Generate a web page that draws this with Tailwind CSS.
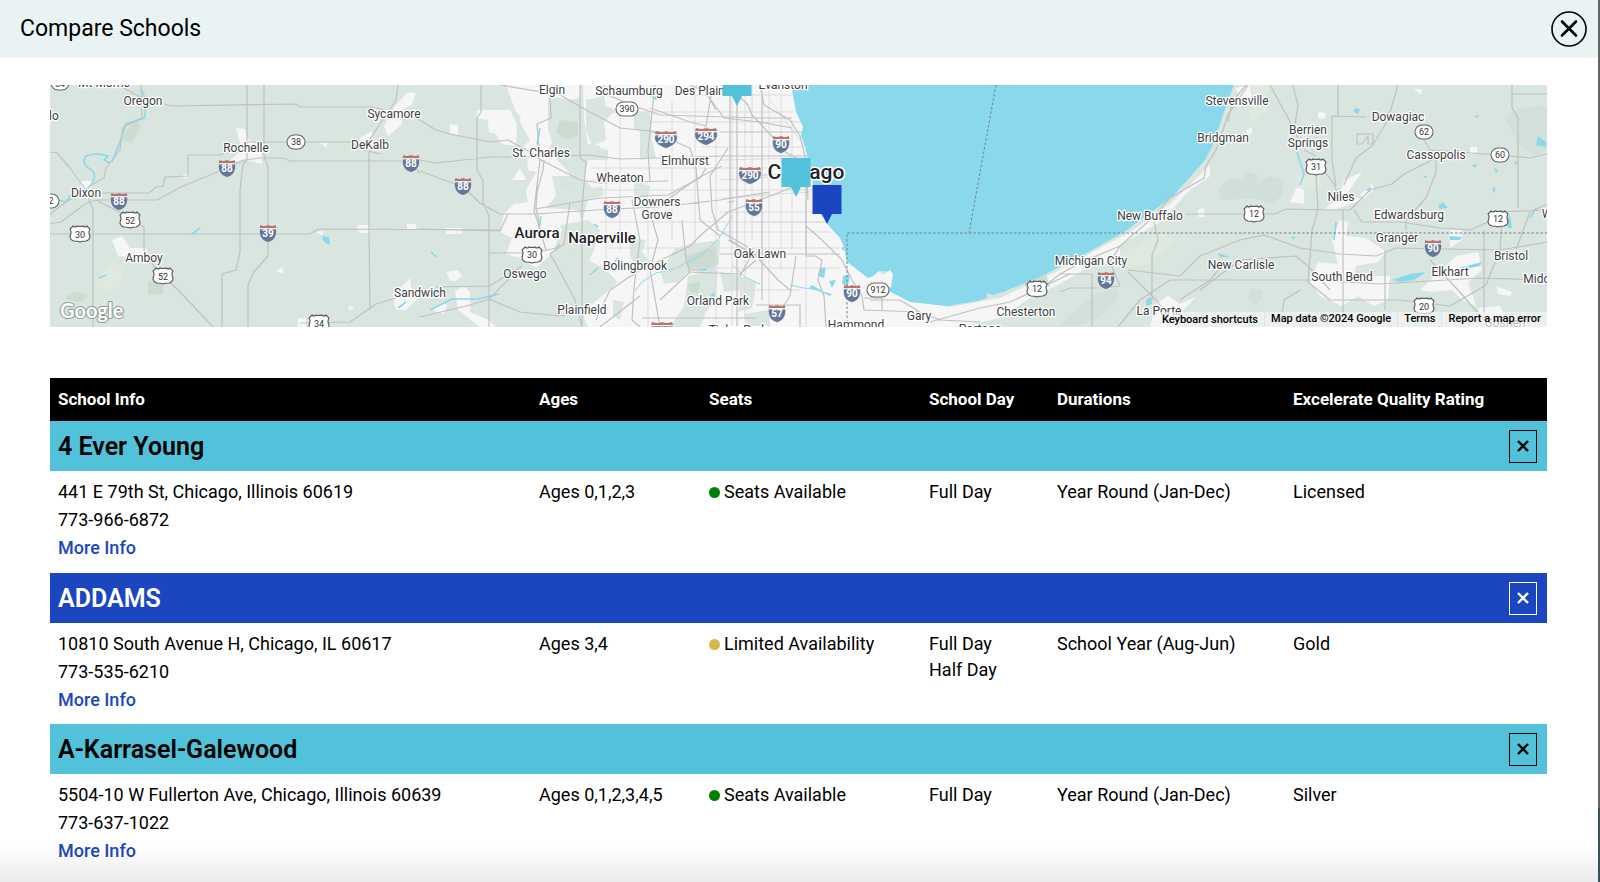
<!DOCTYPE html>
<html lang="en">
<head>
  <meta charset="UTF-8" />
  <meta name="viewport" content="width=device-width, initial-scale=1.0" />
  <title>Compare Schools</title>
  <script src="https://cdn.jsdelivr.net/npm/@tailwindcss/browser@4"></script>
</head>
<body class="flex min-h-screen bg-white font-[Roboto,sans-serif] text-black">
  <div class="flex-1 min-w-0">
    <!-- Header -->
    <header class="flex h-[58px] items-center justify-between bg-[#eaf3f4] pl-5 pr-[11px]">
      <h1 class="text-[23px]">Compare Schools</h1>
      <button type="button" aria-label="Close" class="h-9 w-9">
        <svg class="h-9 w-9" viewBox="0 0 36 36" fill="none" stroke="black">
          <circle cx="18" cy="18" r="17" stroke-width="1.6" />
          <path d="M11 10.500 25 24.500M25 10.500 11 24.500" stroke-width="2.6" stroke-linecap="round" />
        </svg>
      </button>
    </header>

    <main class="pl-[50px] pr-[51px] pt-[27px]">
      <!-- Map -->
      <section aria-label="Map of schools" class="relative overflow-hidden">
        <svg class="block h-[242px] w-full" viewBox="50 85 1497 242" preserveAspectRatio="xMidYMid slice">
          <defs>
            <g id="interstate">
              <path d="M-8.500-4H8.500C9.500 3 6 8 0 9.500-6 8-9.500 3-8.500-4Z" fill="#62779a" stroke="#f4f4f4" stroke-width=".7" />
              <path d="M-7.500-8Q-4-6 0-8 4-6 7.500-8L8.500-5H-8.500Z" fill="#b9746f" />
            </g>
            <g id="interstate-wide">
              <path d="M-11-4H11C13 3 7 7 0 9.500-7 7-13 3-11-4Z" fill="#62779a" stroke="#f4f4f4" stroke-width=".7" />
              <path d="M-10-8Q-4-6 0-8 4-6 10-8L11-5H-11Z" fill="#b9746f" />
            </g>
            <path id="us" d="M-7-8Q-5-6-3-8 0-7 3-8 5-6 7-8L10-5Q8-2 10 2 10 6 6 7 2 7 0 8-2 7-6 7-10 6-10 2-8-2-10-5Z" fill="#fff" stroke="#555" stroke-width="1.1" />
            <rect id="state" x="-9" y="-7" width="18" height="14" rx="7" fill="#fff" stroke="#666" stroke-width="1.1" />
            <rect id="state-wide" x="-11" y="-7" width="22" height="14" rx="7" fill="#fff" stroke="#666" stroke-width="1.1" />
            <path id="pin" d="M-14.500-39H14.500V-10H5L0 0-5-10H-14.500Z" />
          </defs>

          <!-- land -->
          <rect x="50" y="85" width="1497" height="242" fill="#d8e6df" />
          <g fill="#cddcd3">
            <path d="M130 125 137 118 141 127 131 143 121 140ZM65 297 74 291 86 294 83 302 66 300ZM148 282H163V294H148Z" />
            <path d="M1218 189 1230 179 1242 179 1248 172 1258 176 1256 183 1270 176 1284 180 1282 196 1270 204 1256 198 1241 199 1222 200Z" opacity=".7" />
            <path d="M1073 312 1095 294 1117 289 1118 300 1100 316 1078 326H1060ZM1250 288 1262 290 1262 300 1254 306 1248 297ZM1504 118 1520 108 1547 106V150L1536 156 1520 145Z" opacity=".6" />
            <path d="M1146 188 1178 146 1204 112 1216 116 1200 150 1172 176Z" opacity=".5" />
          </g>
          <g fill="#dfe9df">
            <path d="M97 279 112 260 123 268 121 285 107 293 96 286ZM1252 85H1270L1266 110 1250 124ZM1120 256 1160 232 1176 240 1150 262 1130 270ZM1296 178 1318 170 1322 188 1300 192Z" />
          </g>
          <!-- built-up areas -->
          <g fill="#f6f6f7">
            <path d="M236 128 245 129 247 138 260 146 262 158 262 164 246 160 228 162 242 150ZM80 181H92L91 189 82 190ZM112 240 122 236 130 248 146 248 150 258 118 256ZM183 174H188V178H183ZM321 143 328 143 326 148ZM276 271 282 267 284 274ZM357 225H370V233H359ZM407 224H416V229H407ZM360 138 372 131 374 145 360 150ZM394 107 408 92 416 93 412 104 402 110 402 124 388 136 384 126ZM393 296 410 278 412 291 420 296 406 310 396 310ZM348 306 354 307 350 311ZM298 318H306V327H298ZM315 232 324 231 322 235Z" />
            <path d="M477 110H510L517 124 516 146 502 144 496 134 489 132 488 120 477 118ZM450 124 458 125V135L450 133ZM506 85H535L524 106 532 130 516 112ZM445 228H462V234H446ZM446 272 458 270 462 276 454 282 450 280ZM455 291 464 286 470 292V312L488 320 496 327H480L458 310ZM433 311 438 305 447 304 444 314ZM512 180 520 168 526 180Z" />
            <path d="M534 85H580V98L560 102 552 120 552 142 548 150 572 176 552 176 556 196 546 208 578 210 582 222 562 230 552 254 536 268 520 258 506 254 512 238 500 232 504 214 514 204 528 202 526 190 536 172 528 170 527 156 520 150 530 140 520 122 523 102Z" />
            <path d="M583 85H860V327H588L582 312 602 296 618 282 604 268 584 258 578 244 590 232 582 222 588 200 598 196 584 178 588 160 606 160 600 146 588 144 584 120Z" />
            <path d="M836 220H860L870 272 905 300 950 307 1000 298 1056 272 1130 232 1170 204 1210 165 1210 176 1190 190 1160 222 1120 245 1120 262 1090 266 1060 284 1030 298 1000 318 960 327H836Z" />
            <path d="M1236 88 1250 85 1252 98 1240 100ZM1297 187 1304 190V204L1290 202ZM1318 112 1326 113 1324 119 1318 118ZM1247 129 1252 128V134H1247ZM1414 88 1422 90 1420 95ZM1198 210 1204 207 1205 217 1198 217ZM1344 180 1362 172 1348 192 1362 200 1340 208 1324 210 1340 196ZM1340 220 1348 222 1346 236 1366 238 1378 246 1386 252 1378 262 1356 266 1354 276 1390 276 1388 300 1374 306 1358 296 1342 306 1320 296 1310 282 1318 262 1338 264 1332 240ZM1420 290 1456 256 1478 252 1482 270 1468 282 1476 306 1462 300 1452 290 1432 292ZM1450 230H1462V240L1450 248ZM1470 147H1477V154H1470ZM1156 304 1168 296 1180 304 1196 297 1176 318 1164 327H1150ZM1496 286 1512 292 1510 296 1498 294ZM1360 195 1372 184 1374 190 1364 198ZM1478 308 1500 306 1510 327H1484Z" />
          </g>
          <!-- forest preserves -->
          <g fill="#d8e6df">
            <path d="M548 96 574 100 582 108 580 142 566 138 552 142 548 130ZM586 100 604 96 606 106 616 110 604 122 606 140 592 146 586 130ZM590 145 608 150 608 160 588 160ZM634 112 650 112 652 140 656 158 640 160 640 132 634 128ZM634 180 650 186 648 197 634 197ZM588 190 602 186 604 195 592 199ZM560 225 588 220 600 230 594 250 588 262 572 258ZM630 238 646 240 642 252 650 262 638 270 630 256ZM660 270 676 248 690 244 720 240 719 262 714 272 690 270 678 282 664 284ZM688 276 704 272 718 270 716 296 706 312 700 327H670L684 306ZM590 262 612 276 596 290 584 284ZM720 272 740 276 756 282 754 296 742 290 724 292ZM740 290 755 294 752 308 738 312ZM744 314 768 310 770 327H748ZM613 300 624 302 620 320 613 316ZM650 85 660 90 654 100 646 94ZM600 85 620 88 616 94 604 92ZM704 126 710 128 706 140Z" />
            <path d="M970 327 1000 318 1030 304 1060 290 1056 327Z" />
          </g>
          <g fill="#cbdbd1">
            <path d="M560 120 578 122 578 136 566 140 556 132ZM686 256 716 246 718 264 702 272 688 270ZM688 284 700 282 698 294 690 292ZM1024 284 1046 275 1050 286 1030 294Z" />
          </g>

          <!-- water -->
          <g fill="#8ad8ec">
            <path d="M791 85 796 112 803 127 801 135 805 147 807 155 812 180 820 213 828 225 840 238 844 247 847 262 868 278 872 277 880 271 891 272 892 286 887 290 910 302 947 306 977 301 987 298 987 293 993 295 1003 292 1020 285 1040 277 1087 253 1124 232 1150 213 1172 197 1190 177 1205 160 1212 147 1217 133 1224 112 1234 85Z" />
            <path d="M820 268 826 267 824 278 818 276ZM829 281 836 280 832 288ZM843 276 850 274 848 286 842 284ZM812 285 824 292 832 294 830 296 816 290 809 288ZM727 202 735 200 732 203ZM322 236 329 237 330 245 324 242ZM1355 108 1360 109 1358 114 1354 112ZM1474 116 1480 115 1477 118ZM1538 136 1546 142V147L1536 145ZM1218 253 1230 257 1220 257ZM1291 237 1295 236 1294 240ZM1450 236 1462 237 1460 240 1450 240ZM1438 206 1443 202 1448 208 1440 209ZM1494 168 1498 170 1496 174ZM1514 161 1518 162 1516 165ZM1492 190 1495 186 1495 193ZM1423 176 1428 176 1425 178ZM1472 165 1477 164 1475 168ZM1366 190 1371 186 1370 192ZM1146 300 1151 297 1152 304 1146 306ZM1392 280 1410 274 1426 272 1414 280 1400 282ZM1458 268 1482 262 1480 266 1460 270ZM1504 219 1510 216 1512 228 1508 228ZM698 270 708 267 706 271ZM710 296 714 292 715 297ZM652 97 658 96 656 100ZM841 248 845 246 844 251Z" />
          </g>
          <path d="M868 278 872 277 879 271 883 275 890 270 893 274 891 286 880 290Z" fill="#f6f6f7" />
          <g fill="none" stroke="#8ad8ec" stroke-width="1.6">
            <path d="M142 90Q148 105 144 118L126 124Q120 144 112 162M110 163 104 160 108 156Q96 152 86 156 80 164 92 170 98 176 90 186L86 190M59 200 66 202 72 194M398 308 406 302M99 278 106 275M192 234 200 228M540 128 537 145M541 216 538 235M430 310 444 303 452 299H478L499 294M431 252 436 257M590 275 598 268M594 224 598 227M614 262 618 258M1297 152 1304 174 1300 185M1334 240 1336 222M1530 218 1536 208" />
            <path d="M635 291 642 282 656 273 674 269 700 256 718 240 733 215M733 265 745 277 760 284M790 285 804 288 820 290" stroke-width="1" />
          </g>

          <!-- minor streets -->
          <g fill="none" stroke="#dcdcdf" stroke-width="1">
            <path d="M590 168H800M590 190H815M600 222H826M610 248H840M640 268H840M586 112H794M690 95H792M650 122H800M700 147H806M606 150V260M620 110V250M648 200V327M672 100V240M695 85V250M716 140V327M732 85V327M745 85V327M752 85V240M769 85V327M781 85V270M792 120V250M806 200V327M720 180 805 175M722 232H830M740 290H800M722 198 810 192M720 160 804 158M720 212H822M752 222H826M770 100 800 140M560 185 600 180" />
          </g>
          <!-- highways -->
          <g fill="none" stroke="#c0c0c1" stroke-width="1.2" stroke-linejoin="round">
            <path d="M247 85V160L243 164 240 190V252L236 270 222 274V327M264 85V155L268 168V256L254 272 248 285V327M165 104 171 106 296 104 300 107 372 107 385 110M245 142H350L364 150 380 154M50 234H310L318 229 500 230M50 152 57 153 70 168 84 187 93 210V327M141 85 142 118 123 127 120 150 106 168 104 178 90 186M96 193H149L156 187 163 186 165 177 188 176V155H220L234 150M118 85 142 98M50 214 66 202 80 194M50 224 61 222 85 204 96 200H157L181 187 227 168 244 160 260 158H283L290 161H400L412 163 420 174M96 200 125 215 144 227V250L155 268 180 292 213 327M369 152V230L370 310M300 323 350 322 376 304 396 298M398 85 396 100 384 118 376 130 368 142M408 115 420 120" />
            <path d="M420 120 436 130 450 134 490 142 508 140 530 152 541 160 580 180 600 183 668 181M420 160 436 163 490 157 530 157 588 155 620 159 660 158 720 156M420 171 463 187 480 203 500 214 535 214 612 209 660 207 720 200 770 192M481 85V112L477 118V170L483 180V202L489 216V327M420 229 500 231 508 214M550 95 551 118 537 124 540 160 534 210 546 250M544 160 543 170 537 192 536 208 540 226M580 85V158L586 162 582 208V327M535 209 600 198 668 195 700 178 706 168M570 202 564 244 550 254 556 264 575 300 582 327M489 253H534L556 248 560 244M436 287 489 286 506 276 522 266M420 317 470 305 489 299 520 312 560 316 580 312M489 299 510 278M596 320 610 290 640 270 690 246 702 234 714 224 728 212 760 200 796 186M640 327 632 320 634 288 640 240 632 200M650 212 658 240 650 270 660 327M660 300 690 272 686 260 682 220M700 85 724 118 760 122 792 128M655 85 648 150 650 182M648 130 690 148 696 168 700 220 720 236M728 148 710 176 712 210 718 230 760 254M500 85 560 95 590 112 620 128 660 132M650 108 690 122 706 126 712 90" />
            <path d="M600 92 640 108 660 115 760 118 792 118M690 85 706 92 716 110M730 85V240M738 95 748 105 752 115 785 150M760 85 764 105 790 120 800 136 806 160 808 200M737 85V327M762 85V300M720 132H802M720 156H808M720 254H840M750 175H780M728 240 755 255 778 280 790 290M664 202 698 178 722 166M782 150 796 158 806 180 806 256 815 256 822 260 818 280 824 296 826 327M796 256 790 296 776 318M806 226 822 240 842 260 852 280 862 296 864 310 920 312 940 320 980 322M756 305H800V327M740 276 752 254 730 240M870 300H900L920 312M930 322 980 308 1010 302 1036 290 1070 274M864 298 882 298 882 310M642 318H756M688 272 740 274 756 260M600 327 640 296" />
            <path d="M1248 85 1228 115 1216 150 1206 166 1204 178 1170 198 1150 220 1120 246 1082 262 1060 274 1040 290M1246 85 1232 102 1228 122M1270 85 1288 118 1298 138M1293 85 1298 106 1294 130M1304 150 1316 156M1316 175 1318 210 1312 230 1308 282 1330 300H1400L1450 306M1316 160 1334 184 1338 195M1332 116V160L1336 186M1332 116 1366 117M1338 85V116M1374 118 1390 112 1398 85M1388 120 1372 146 1356 158 1344 185M1186 214H1275L1286 209 1330 210H1350L1370 190 1392 184 1404 174 1436 158V172L1426 198 1406 220V230M1424 140 1430 150 1500 155 1530 158 1547 154M1512 85V108L1518 118V208M1512 94 1547 94M1354 210 1362 222 1400 222 1440 228 1470 230 1488 222 1500 212 1547 210M1343 210V327M1128 270 1180 276 1200 256 1240 240 1264 235 1300 248 1340 254 1376 256 1396 248 1500 250 1547 242M1120 246 1110 262 1120 286 1100 288M1154 222 1158 240 1152 255V300M1118 327 1140 300 1170 280 1310 280 1380 284 1480 278 1547 280M1128 272 1156 300 1170 318M1060 274H1092V327M1060 292 1070 288 1098 288M1200 290 1240 260 1296 256 1310 268 1330 290M1450 306 1486 285 1500 250 1502 220M1430 260 1458 290 1490 327M1484 230V327M1516 250 1530 212 1547 204M1300 290 1284 300 1280 327M1385 250V310M1180 300 1210 280 1225 262" />
            <path d="M1357 134H1373V144H1368V136L1362 144H1357Z" />
          </g>

          <!-- state lines -->
          <g fill="none" stroke="#6f8388" stroke-width="1" stroke-dasharray="2.5 2">
            <path d="M847 327V233H1547M996 85 969 233" />
          </g>

          <!-- road shields -->
          <use href="#interstate" x="227" y="168" />
          <use href="#interstate" x="119" y="201" />
          <use href="#interstate" x="411" y="163" />
          <use href="#interstate" x="268" y="233" />
          <use href="#interstate" x="463" y="186" />
          <use href="#interstate" x="612" y="209" />
          <use href="#interstate-wide" x="666" y="139" />
          <use href="#interstate-wide" x="706" y="136" />
          <use href="#interstate-wide" x="750" y="175" />
          <use href="#interstate-wide" x="662" y="330" />
          <use href="#interstate" x="754" y="207" />
          <use href="#interstate" x="781" y="144" />
          <use href="#interstate" x="852" y="293" />
          <use href="#interstate" x="777" y="313" />
          <use href="#interstate" x="1106" y="280" />
          <use href="#interstate" x="1433" y="248" />
          <use href="#us" x="130" y="220" />
          <use href="#us" x="163" y="276" />
          <use href="#us" x="80" y="234" />
          <use href="#us" x="319" y="323" />
          <use href="#us" x="532" y="255" />
          <use href="#us" x="1037" y="289" />
          <use href="#us" x="1254" y="214" />
          <use href="#us" x="1316" y="167" />
          <use href="#us" x="1498" y="219" />
          <use href="#us" x="1424" y="306" />
          <use href="#state" x="60" y="83" />
          <use href="#state" x="50" y="201" />
          <use href="#state" x="296" y="142" />
          <use href="#state" x="1424" y="132" />
          <use href="#state" x="1500" y="155" />
          <use href="#state-wide" x="627" y="109" />
          <use href="#state-wide" x="878" y="290" />
          <g class="text-[10px] font-bold" fill="#fff" text-anchor="middle">
            <text x="227" y="172">88</text>
            <text x="119" y="205">88</text>
            <text x="411" y="167">88</text>
            <text x="268" y="237">39</text>
            <text x="463" y="190">88</text>
            <text x="612" y="213">88</text>
            <text x="666" y="143">290</text>
            <text x="706" y="140">294</text>
            <text x="750" y="179">290</text>
            <text x="754" y="211">55</text>
            <text x="781" y="148">90</text>
            <text x="852" y="297">90</text>
            <text x="777" y="317">57</text>
            <text x="1106" y="284">94</text>
            <text x="1433" y="252">90</text>
          </g>
          <g class="text-[9px]" fill="#333" text-anchor="middle">
            <text x="130" y="224">52</text>
            <text x="163" y="280">52</text>
            <text x="80" y="238">30</text>
            <text x="319" y="327">34</text>
            <text x="532" y="258">30</text>
            <text x="1037" y="292">12</text>
            <text x="1254" y="217">12</text>
            <text x="1316" y="170">31</text>
            <text x="1498" y="222">12</text>
            <text x="1424" y="310">20</text>
            <text x="60" y="87">64</text>
            <text x="51" y="204">2</text>
            <text x="296" y="145">38</text>
            <text x="1424" y="135">62</text>
            <text x="1500" y="158">60</text>
            <text x="627" y="112">390</text>
            <text x="878" y="293">912</text>
          </g>

          <!-- place names -->
          <g class="text-[12px] [paint-order:stroke]" fill="#3c4043" stroke="#fff" stroke-width="2.5" stroke-linejoin="round" text-anchor="middle">
            <text x="104" y="87">Mt Morris</text>
            <text x="143" y="105">Oregon</text>
            <text x="54" y="120">lo</text>
            <text x="394" y="118">Sycamore</text>
            <text x="246" y="152">Rochelle</text>
            <text x="370" y="149">DeKalb</text>
            <text x="86" y="197">Dixon</text>
            <text x="144" y="262">Amboy</text>
            <text x="420" y="297">Sandwich</text>
            <text x="552" y="94">Elgin</text>
            <text x="629" y="95">Schaumburg</text>
            <text x="706" y="95">Des Plaines</text>
            <text x="541" y="157">St. Charles</text>
            <text x="685" y="165">Elmhurst</text>
            <text x="620" y="182">Wheaton</text>
            <text x="657" y="206">Downers</text>
            <text x="657" y="219">Grove</text>
            <text x="635" y="270">Bolingbrook</text>
            <text x="525" y="278">Oswego</text>
            <text x="582" y="314">Plainfield</text>
            <text x="718" y="305">Orland Park</text>
            <text x="738" y="334">Tinley Park</text>
            <text x="783" y="89">Evanston</text>
            <text x="760" y="258">Oak Lawn</text>
            <text x="919" y="320">Gary</text>
            <text x="856" y="329">Hammond</text>
            <text x="1026" y="316">Chesterton</text>
            <text x="980" y="333">Portage</text>
            <text x="1237" y="105">Stevensville</text>
            <text x="1398" y="121">Dowagiac</text>
            <text x="1223" y="142">Bridgman</text>
            <text x="1308" y="134">Berrien</text>
            <text x="1308" y="147">Springs</text>
            <text x="1436" y="159">Cassopolis</text>
            <text x="1341" y="201">Niles</text>
            <text x="1409" y="219">Edwardsburg</text>
            <text x="1150" y="220">New Buffalo</text>
            <text x="1397" y="242">Granger</text>
            <text x="1511" y="260">Bristol</text>
            <text x="1450" y="276">Elkhart</text>
            <text x="1091" y="265">Michigan City</text>
            <text x="1241" y="269">New Carlisle</text>
            <text x="1342" y="281">South Bend</text>
            <text x="1553" y="283">Middlebury</text>
            <text x="1547" y="218">W</text>
            <text x="1159" y="315">La Porte</text>
            <text x="1505" y="327">Goshen</text>
          </g>
          <g class="text-[15px] font-medium [paint-order:stroke]" fill="#202124" stroke="#fff" stroke-width="2.5" stroke-linejoin="round" text-anchor="middle">
            <text x="537" y="238">Aurora</text>
            <text x="602" y="243">Naperville</text>
          </g>
          <text class="text-[21px] font-medium [paint-order:stroke]" x="806" y="179" fill="#202124" stroke="#fff" stroke-width="3" stroke-linejoin="round" text-anchor="middle">Chicago</text>

          <!-- school markers -->
          <use href="#pin" x="737" y="106" fill="#51c2d9" />
          <use href="#pin" x="796" y="197" fill="#51c2d9" />
          <use href="#pin" x="827" y="224" fill="#1c46c0" />

          <text class="text-[20px] font-[Lato,sans-serif] font-bold [paint-order:stroke]" x="60" y="318" fill="#fff" stroke="#8f9996" stroke-width="2" stroke-linejoin="round">Google</text>
        </svg>
        <div class="absolute bottom-0 right-0 flex h-[15px] divide-x divide-[#d8e6df] bg-[#f5f5f5]/70 text-[11px] leading-[13px] font-medium">
          <button type="button" class="px-[6px]">Keyboard shortcuts</button>
          <span class="px-[6px]">Map data ©2024 Google</span>
          <a href="#" class="px-[6px]">Terms</a>
          <a href="#" class="px-[6px]">Report a map error</a>
        </div>
      </section>

      <!-- Comparison table -->
      <table class="mt-[51px] w-full table-fixed border-collapse text-left text-[18px]">
        <colgroup>
          <col class="w-[481px]" />
          <col class="w-[170px]" />
          <col class="w-[220px]" />
          <col class="w-[128px]" />
          <col class="w-[236px]" />
          <col />
        </colgroup>
        <thead class="text-[17px] leading-6">
          <tr class="h-[43px] bg-black text-white">
            <th class="px-2 pb-[2px] font-bold">School Info</th>
            <th class="px-2 pb-[2px] font-bold">Ages</th>
            <th class="px-2 pb-[2px] font-bold">Seats</th>
            <th class="px-2 pb-[2px] font-bold">School Day</th>
            <th class="px-2 pb-[2px] font-bold">Durations</th>
            <th class="px-2 pb-[2px] font-bold">Excelerate Quality Rating</th>
          </tr>
        </thead>
        <tbody>
          <tr class="h-[50px] bg-[#51c2d9]">
            <td colspan="6" class="pl-2 pr-[10px]">
              <div class="flex items-center justify-between">
                <h2 class="pt-[2px] text-[25px] leading-8 font-semibold">4 Ever Young</h2>
                <button type="button" aria-label="Remove 4 Ever Young" class="flex h-[33px] w-7 items-center justify-center border border-black">
                  <svg class="h-3 w-3" viewBox="0 0 12 12" fill="none" stroke="currentColor" stroke-width="2.4"><path d="M1 1 11 11M11 1 1 11" /></svg>
                </button>
              </div>
            </td>
          </tr>
          <tr class="h-[102px] align-top leading-[26px]">
            <td class="px-2 pt-[7px] leading-7">
              <p>441 E 79th St, Chicago, Illinois 60619</p>
              <p>773-966-6872</p>
              <a href="#" class="font-medium text-[#1c46c0]">More Info</a>
            </td>
            <td class="px-2 pt-2">Ages 0,1,2,3</td>
            <td class="px-2 pt-2">
              <div class="flex items-center gap-1"><span class="h-[11px] w-[11px] rounded-full bg-[#008000]"></span>Seats Available</div>
            </td>
            <td class="px-2 pt-2">Full Day</td>
            <td class="px-2 pt-2">Year Round (Jan-Dec)</td>
            <td class="px-2 pt-2">Licensed</td>
          </tr>
          <tr class="h-[50px] bg-[#1c46c0] text-white">
            <td colspan="6" class="pl-2 pr-[10px]">
              <div class="flex items-center justify-between">
                <h2 class="pt-[2px] text-[25px] leading-8 font-semibold">ADDAMS</h2>
                <button type="button" aria-label="Remove ADDAMS" class="flex h-[33px] w-7 items-center justify-center border border-white">
                  <svg class="h-3 w-3" viewBox="0 0 12 12" fill="none" stroke="currentColor" stroke-width="2.4"><path d="M1 1 11 11M11 1 1 11" /></svg>
                </button>
              </div>
            </td>
          </tr>
          <tr class="h-[101px] align-top leading-[26px]">
            <td class="px-2 pt-[7px] leading-7">
              <p>10810 South Avenue H, Chicago, IL 60617</p>
              <p>773-535-6210</p>
              <a href="#" class="font-medium text-[#1c46c0]">More Info</a>
            </td>
            <td class="px-2 pt-2">Ages 3,4</td>
            <td class="px-2 pt-2">
              <div class="flex items-center gap-1"><span class="h-[11px] w-[11px] rounded-full bg-[#d9b84a]"></span>Limited Availability</div>
            </td>
            <td class="px-2 pt-2">Full Day<br />Half Day</td>
            <td class="px-2 pt-2">School Year (Aug-Jun)</td>
            <td class="px-2 pt-2">Gold</td>
          </tr>
          <tr class="h-[50px] bg-[#51c2d9]">
            <td colspan="6" class="pl-2 pr-[10px]">
              <div class="flex items-center justify-between">
                <h2 class="pt-[2px] text-[25px] leading-8 font-semibold">A-Karrasel-Galewood</h2>
                <button type="button" aria-label="Remove A-Karrasel-Galewood" class="flex h-[33px] w-7 items-center justify-center border border-black">
                  <svg class="h-3 w-3" viewBox="0 0 12 12" fill="none" stroke="currentColor" stroke-width="2.4"><path d="M1 1 11 11M11 1 1 11" /></svg>
                </button>
              </div>
            </td>
          </tr>
          <tr class="h-[102px] align-top leading-[26px]">
            <td class="px-2 pt-[7px] leading-7">
              <p>5504-10 W Fullerton Ave, Chicago, Illinois 60639</p>
              <p>773-637-1022</p>
              <a href="#" class="font-medium text-[#1c46c0]">More Info</a>
            </td>
            <td class="px-2 pt-2">Ages 0,1,2,3,4,5</td>
            <td class="px-2 pt-2">
              <div class="flex items-center gap-1"><span class="h-[11px] w-[11px] rounded-full bg-[#008000]"></span>Seats Available</div>
            </td>
            <td class="px-2 pt-2">Full Day</td>
            <td class="px-2 pt-2">Year Round (Jan-Dec)</td>
            <td class="px-2 pt-2">Silver</td>
          </tr>
        </tbody>
      </table>
    </main>
  </div>

  <!-- Right edge -->
  <div class="flex w-[2px] flex-col">
    <div class="flex-1 bg-[#666463]"></div>
    <div class="h-[74px] bg-[#34535b]"></div>
  </div>

  <!-- Bottom scroll shade -->
  <div class="pointer-events-none fixed bottom-0 left-0 right-[2px] h-9 bg-linear-to-b from-transparent to-black/8"></div>
</body>
</html>
